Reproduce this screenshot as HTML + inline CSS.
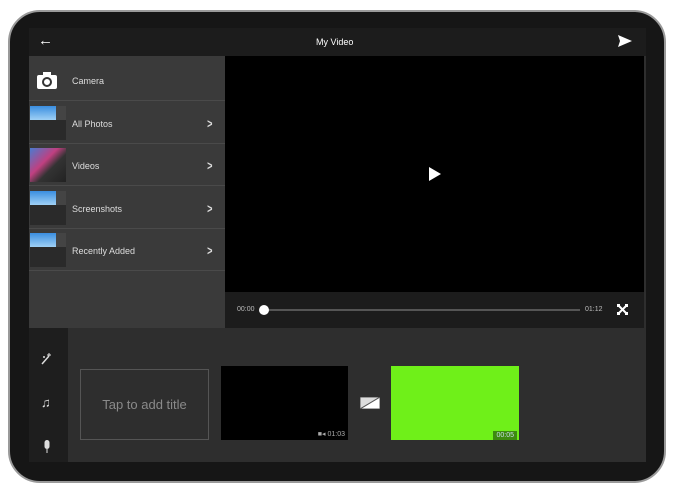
<!DOCTYPE html>
<html><head><style>
*{margin:0;padding:0;box-sizing:border-box}
body{width:675px;height:493px;background:#fff;position:relative;overflow:hidden;font-family:"Liberation Sans",sans-serif}
.a{position:absolute}
.row{position:absolute;left:29px;width:196px;height:42px;border-bottom:1px solid #4a4a4a}
.row span{position:absolute;left:43px;top:17px;font-size:9px;color:#ddd}
.row i{position:absolute;right:11px;top:14px;color:#ddd;font-style:normal;font-size:13px;font-weight:bold;transform:scaleX(.7)}
.th{position:absolute;left:1px;top:4px;width:36px;height:34px;background:#2a2a2a}
.th b{position:absolute;left:0;top:0;width:26px;height:14px;background:linear-gradient(#3a8ee0,#9fd0f5)}
.th em{position:absolute;left:26px;top:0;width:10px;height:14px;background:#444}
</style></head><body>
<div class="a" style="left:8px;top:10px;width:658px;height:473px;border-radius:32px;background:#161616;border:2px solid #9a9a9a"></div>
<div class="a" style="left:29px;top:28px;width:617px;height:434px;background:#2e2e2e"></div>
<div class="a" style="left:29px;top:28px;width:617px;height:28px;background:#1c1c1c"></div>
<div class="a" style="left:38px;top:32px;color:#fff;font-size:15px;font-weight:bold">←</div>
<div class="a" style="left:316px;top:37px;color:#fff;font-size:9px">My Video</div>
<svg class="a" style="left:618px;top:35px" width="14" height="12" viewBox="0 0 14 12"><path d="M0 0L14 6L0 12L2 6Z" fill="#fff"/></svg>
<div class="a" style="left:29px;top:56px;width:196px;height:272px;background:#3a3a3a"></div>
<div class="a" style="left:225px;top:56px;width:419px;height:236px;background:#000"></div>
<svg class="a" style="left:429px;top:167px" width="12" height="14"><path d="M0 0L12 7L0 14Z" fill="#fff"/></svg>
<div class="a" style="left:225px;top:292px;width:419px;height:36px;background:#1c1c1c"></div>
<div class="a" style="left:237px;top:306px;color:#bbb;font-size:7px">00:00</div>
<div class="a" style="left:264px;top:309px;width:316px;height:2px;background:#555"></div>
<div class="a" style="left:259px;top:305px;width:10px;height:10px;border-radius:50%;background:#fff"></div>
<div class="a" style="left:585px;top:306px;color:#bbb;font-size:7px">01:12</div>
<svg class="a" style="left:617px;top:304px" width="11" height="11"><path d="M1 1L10 10M10 1L1 10" stroke="#fff" stroke-width="2"/><rect x="0" y="0" width="3" height="3" fill="#fff"/><rect x="8" y="0" width="3" height="3" fill="#fff"/><rect x="0" y="8" width="3" height="3" fill="#fff"/><rect x="8" y="8" width="3" height="3" fill="#fff"/></svg>
<div class="row" style="top:59px"><svg class="a" style="left:8px;top:13px" width="20" height="17"><rect x="0" y="3" width="20" height="14" rx="2" fill="#fff"/><rect x="6" y="0" width="8" height="4" fill="#fff"/><circle cx="10" cy="10" r="4" fill="none" stroke="#333" stroke-width="2"/></svg><span>Camera</span></div>
<div class="row" style="top:102px"><div class="th"><b></b><em></em></div><span>All Photos</span><i>&gt;</i></div>
<div class="row" style="top:144px"><div class="th" style="background:linear-gradient(135deg,#4a7bd0,#c04080 40%,#333 60%,#222)"></div><span>Videos</span><i>&gt;</i></div>
<div class="row" style="top:187px"><div class="th"><b></b><em></em></div><span>Screenshots</span><i>&gt;</i></div>
<div class="row" style="top:229px"><div class="th"><b></b><em></em></div><span>Recently Added</span><i>&gt;</i></div>
<div class="a" style="left:29px;top:328px;width:39px;height:134px;background:#1e1e1e"></div>
<svg class="a" style="left:41px;top:353px" width="11" height="12"><path d="M1 11L8 3" stroke="#ddd" stroke-width="1.5"/><path d="M8 0V3M6 2H10M3 3V5M2 4H4" stroke="#ddd"/></svg>
<div class="a" style="left:41px;top:395px;color:#ddd;font-size:13px">♫</div>
<svg class="a" style="left:43px;top:440px" width="8" height="13"><rect x="1.5" y="0" width="5" height="9" rx="2.5" fill="#ddd"/><path d="M4 9V13" stroke="#ddd"/></svg>
<div class="a" style="left:80px;top:369px;width:129px;height:71px;border:1px solid #555;color:#8a8a8a;font-size:13px;text-align:center;line-height:69px">Tap to add title</div>
<div class="a" style="left:221px;top:366px;width:127px;height:74px;background:#000"><span class="a" style="right:3px;bottom:2px;color:#aaa;font-size:7px">■◂ 01:03</span></div>
<svg class="a" style="left:360px;top:397px" width="20" height="12"><rect width="20" height="12" fill="#ddd"/><path d="M0 12L20 0V12Z" fill="#fff"/><path d="M0 12L20 0" stroke="#555"/><rect width="20" height="12" fill="none" stroke="#555"/></svg>
<div class="a" style="left:391px;top:366px;width:128px;height:74px;background:#6ff019"><span class="a" style="right:2px;bottom:0;background:#3d8a10;color:#cde;font-size:7px;padding:1px 3px">00:05</span></div>
</body></html>
